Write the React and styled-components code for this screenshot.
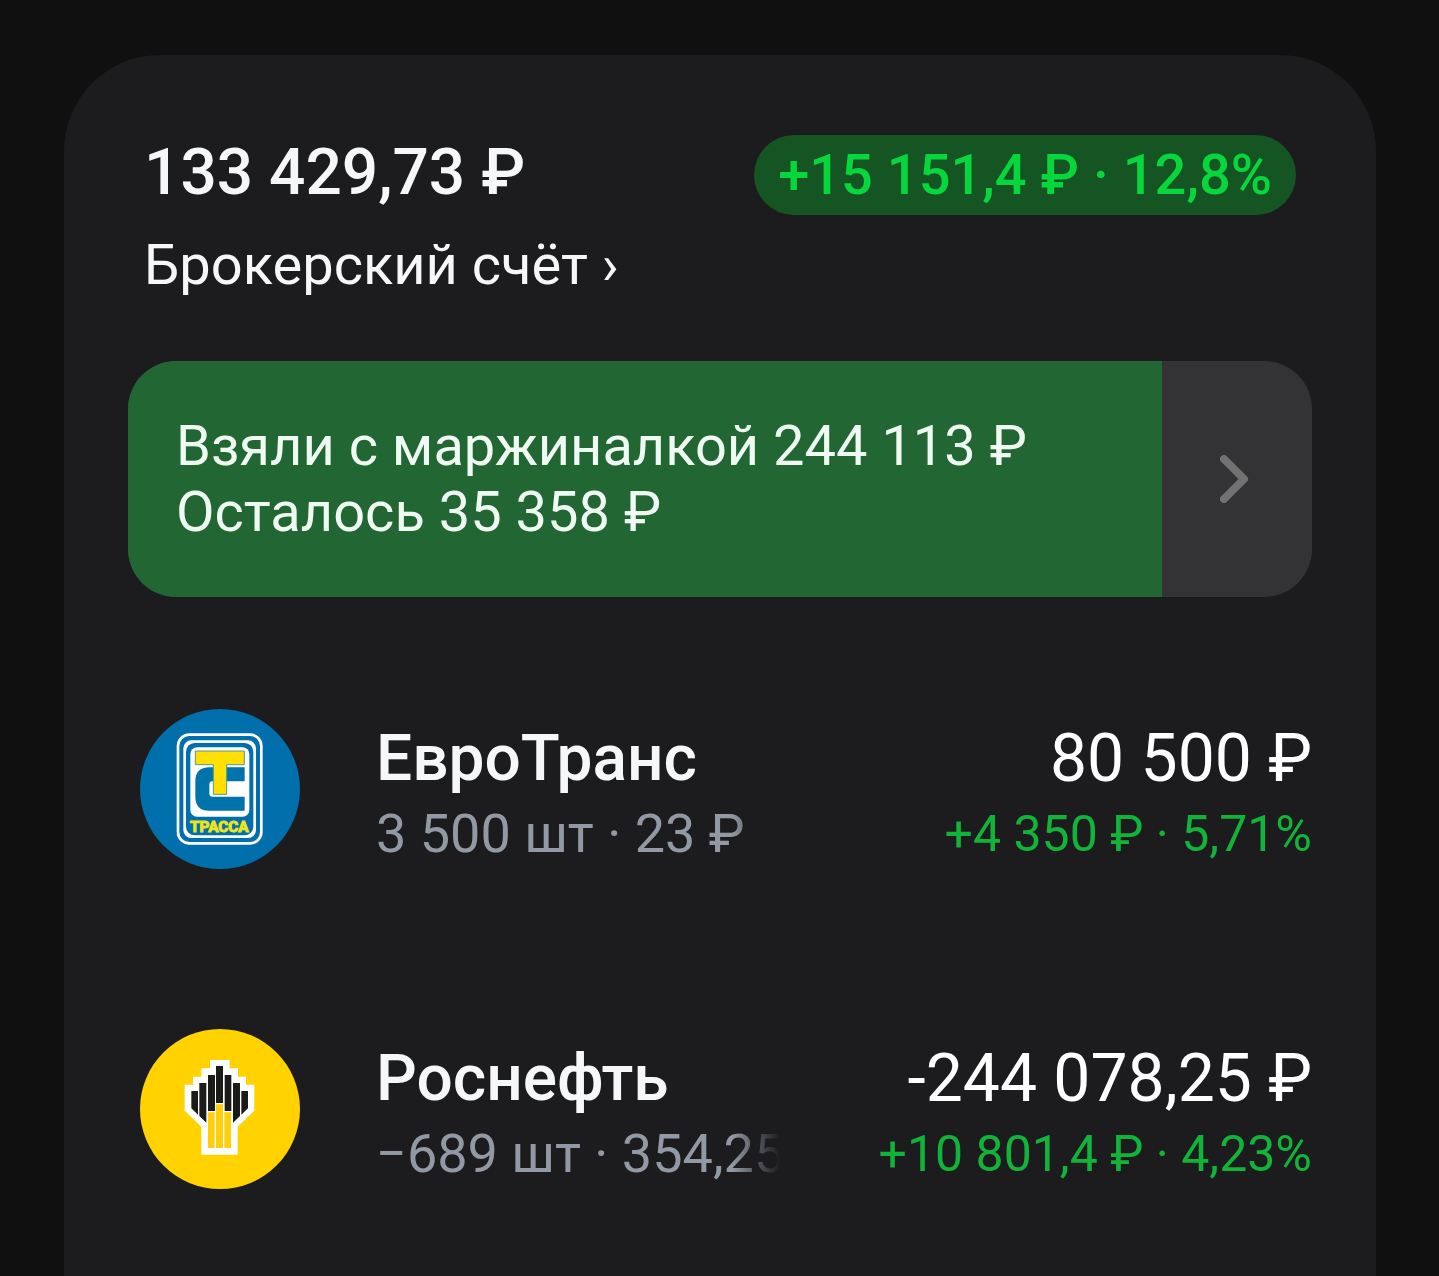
import styled, { createGlobalStyle } from "styled-components";

const GlobalStyle = createGlobalStyle`
  *, *::before, *::after {
    box-sizing: border-box;
  }
  body {
    margin: 0;
    background: #101011;
    color: #f6f7f8;
    font-family: Roboto, "Noto Sans", sans-serif;
  }
`;

const Page = styled.main`
  min-height: 100vh;
  display: flex;
  flex-direction: column;
  padding: 55px 63px 0 64px;
`;

const Card = styled.section`
  flex: 1;
  padding: 76px 64px 0;
  border-radius: 96px 96px 0 0;
  background: #1c1c1e;
`;

const Header = styled.header`
  display: flex;
  justify-content: space-between;
  align-items: flex-start;
  padding: 0 16px;
`;

const Total = styled.h1`
  margin: 0;
  font-size: 64px;
  font-weight: 500;
  line-height: 84px;
  white-space: nowrap;
`;

const AccountLink = styled.a`
  display: inline-block;
  margin-top: 12px;
  color: inherit;
  font-size: 56px;
  line-height: 76px;
  text-decoration: none;
  white-space: nowrap;
`;

const Profit = styled.p`
  margin: 4px 0 0;
  padding: 0 24px;
  border-radius: 40px;
  background: #145523;
  color: #08d63d;
  font-size: 56px;
  font-weight: 500;
  line-height: 80px;
  white-space: nowrap;
`;

const Banner = styled.button`
  display: flex;
  width: 100%;
  margin: 58px 0 0;
  padding: 0;
  border: 0;
  border-radius: 48px;
  overflow: hidden;
  background: #333335;
  color: #effbf2;
  font: inherit;
  text-align: left;
  cursor: pointer;
`;

const BannerFill = styled.span`
  flex: none;
  padding: 52px 48px;
  background: #226634;
  font-size: 56px;
  line-height: 66px;
  white-space: nowrap;
`;

const BannerLine = styled.span`
  display: block;
`;

const BannerArrow = styled.span`
  flex: 1;
  display: flex;
  align-items: center;
  justify-content: center;
  align-self: stretch;
`;

const Positions = styled.ul`
  display: flex;
  flex-direction: column;
  gap: 160px;
  margin: 112px 0 0;
  padding: 0 0 0 12px;
  list-style: none;
`;

const Position = styled.li`
  display: flex;
  align-items: flex-start;
  height: 160px;
`;

const Avatar = styled.svg`
  flex: none;
  width: 160px;
  height: 160px;
  margin-right: 76px;
`;

const Info = styled.div`
  flex: none;
  width: 404px;
  padding-top: 12px;
  overflow: hidden;
  white-space: nowrap;
`;

const Name = styled.h2`
  margin: 0;
  font-size: 64px;
  font-weight: 500;
  line-height: 76px;
`;

const Lot = styled.p`
  margin: 0;
  color: #9299a5;
  font-size: 54px;
  line-height: 74px;
  mask-image: linear-gradient(to left, transparent, #000 48px);
`;

const Value = styled.div`
  flex: 1;
  padding-top: 12px;
  text-align: right;
  white-space: nowrap;
`;

const Amount = styled.p`
  margin: 0;
  color: #fff;
  font-size: 66px;
  line-height: 76px;
`;

const Change = styled.p`
  margin: 0;
  color: #12b339;
  font-size: 50px;
  line-height: 74px;
`;

const TrassaLogo = () => (
  <Avatar viewBox="30 27 480 480" aria-hidden="true">
    <circle cx="270" cy="267" r="240" fill="#006fac" />
    <rect x="144" y="104" width="250" height="326" rx="34" fill="none" stroke="#fff" strokeWidth="8" />
    <rect x="160" y="121" width="218" height="293" rx="24" fill="#fff" />
    <rect x="168" y="129" width="202" height="277" rx="26" fill="#006fac" />
    <rect x="181" y="142" width="177" height="208" rx="20" fill="#fff" />
    <path
      d="M344 202H238Q196 202 196 244V290Q196 332 238 332H344V290H247Q238 290 238 281V253Q238 244 247 244H344Z"
      fill="#0073ad"
    />
    <path
      d="M196 153H343V194H290V283H250V194H196Z"
      fill="#ffe000"
      stroke="#4c9c8c"
      strokeWidth="3"
    />
    <text
      x="268"
      y="397"
      fill="#f0e51c"
      stroke="#f0e51c"
      strokeWidth="3"
      fontFamily="Roboto, sans-serif"
      fontSize="46"
      fontWeight="700"
      textAnchor="middle"
    >
      ТРАССА
    </text>
  </Avatar>
);

const RosneftLogo = () => (
  <Avatar viewBox="30 27 480 480" aria-hidden="true">
    <circle cx="270" cy="267" r="240" fill="#ffd200" />
    <path
      d="M240 120H299V145H324V170H348V194H373V272L323 320V404H214V320L164 272V194H189V170H214V145H240Z"
      fill="#fff"
    />
    <path
      d="M258 138H279V249H258ZM234 165H255V273H234ZM284 165H304V273H284ZM208 189H229V308L208 288ZM309 189H330V288L309 308ZM184 213H204V284L184 265ZM334 213H354V265L334 284Z"
      fill="#1b1c1a"
    />
    <path d="M234 277H254V384H234ZM258 253H279V384H258ZM283 277H303V384H283Z" fill="#ffcf0a" />
  </Avatar>
);

const positions = [
  {
    name: "ЕвроТранс",
    lot: "3 500 шт · 23 ₽",
    amount: "80 500 ₽",
    change: "+4 350 ₽ · 5,71%",
    Logo: TrassaLogo,
  },
  {
    name: "Роснефть",
    lot: "−689 шт · 354,25",
    amount: "-244 078,25 ₽",
    change: "+10 801,4 ₽ · 4,23%",
    Logo: RosneftLogo,
  },
];

const margin = { used: 244113, left: 35358 };

const format = (value) => String(value).replace(/\B(?=(\d{3})+$)/g, " ");

const App = () => {
  const usedShare = (margin.used / (margin.used + margin.left)) * 100;

  return (
    <Page>
      <GlobalStyle />
      <Card>
        <Header>
          <div>
            <Total>133 429,73 ₽</Total>
            <AccountLink href="#account">Брокерский счёт ›</AccountLink>
          </div>
          <Profit>+15 151,4 ₽ · 12,8%</Profit>
        </Header>
        <Banner type="button">
          <BannerFill style={{ width: `${usedShare}%` }}>
            <BannerLine>Взяли с маржиналкой {format(margin.used)} ₽</BannerLine>
            <BannerLine>Осталось {format(margin.left)} ₽</BannerLine>
          </BannerFill>
          <BannerArrow>
            <svg width="34" height="48" viewBox="0 0 34 48" aria-hidden="true">
              <path
                d="M4 4L24 24L4 44"
                fill="none"
                stroke="#727272"
                strokeWidth="8"
                strokeLinecap="round"
                strokeLinejoin="round"
              />
            </svg>
          </BannerArrow>
        </Banner>
        <Positions>
          {positions.map(({ name, lot, amount, change, Logo }) => (
            <Position key={name}>
              <Logo />
              <Info>
                <Name>{name}</Name>
                <Lot>{lot}</Lot>
              </Info>
              <Value>
                <Amount>{amount}</Amount>
                <Change>{change}</Change>
              </Value>
            </Position>
          ))}
        </Positions>
      </Card>
    </Page>
  );
};

export default App;
